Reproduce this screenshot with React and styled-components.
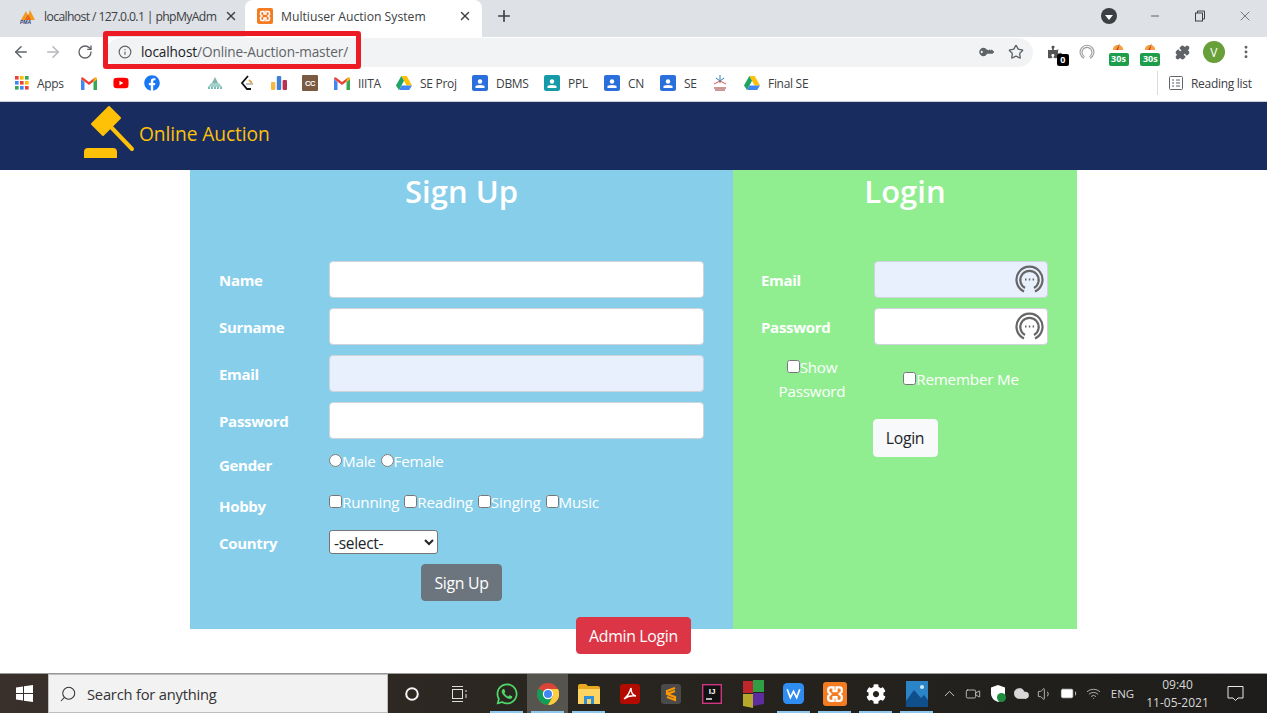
import styled, { createGlobalStyle } from "styled-components";
import {
  ArrowLeft,
  ArrowRight,
  RotateCw,
  Info,
  Star,
  X,
  Plus,
  Minus,
  Puzzle,
  EllipsisVertical,
  ChevronUp,
  Search,
  Volume1,
  Battery,
  Wifi,
  Cloud,
  Video,
} from "lucide-react";
import { FaCog, FaKey, FaPuzzlePiece, FaWhatsapp, FaYoutube, FaFacebook } from "react-icons/fa";

const UI_FONT = `"Open Sans", "Noto Sans", "Liberation Sans", sans-serif`;

const GlobalStyle = createGlobalStyle`
  html, body {
    margin: 0;
    padding: 0;
    background: #fff;
    font-family: ${UI_FONT};
  }
  * { box-sizing: border-box; }
  svg { flex: none; }
`;

const Page = styled.div`
  position: relative;
  width: 1267px;
  height: 713px;
  overflow: hidden;
  display: flex;
  flex-direction: column;
  background: #fff;
`;

/* browser chrome */
const TabStrip = styled.div`
  height: 37px;
  background: #dee1e6;
  display: flex;
  align-items: flex-start;
  color: #3c4043;
  font-size: 12.2px;
`;

const Tab = styled.div`
  width: ${(p) => p.$w}px;
  height: 37px;
  display: flex;
  align-items: center;
  padding: 0 10px 5px ${(p) => p.$pad}px;
  gap: 8px;
  white-space: nowrap;
  background: ${(p) => (p.$active ? "#fff" : "transparent")};
  border-radius: 8px 8px 0 0;
`;

const TabTitle = styled.span`
  flex: 1;
  letter-spacing: ${(p) => p.$track || 0}px;
`;

const NewTab = styled.div`
  width: 44px;
  height: 32px;
  display: flex;
  align-items: center;
  justify-content: center;
  color: #3c4043;
`;

const WindowControls = styled.div`
  margin-left: auto;
  display: flex;
  align-items: center;
  height: 32px;
  color: #3c4043;
`;

const ProfileDot = styled.div`
  width: 16px;
  height: 16px;
  border-radius: 50%;
  background: #3c4043;
  margin-right: 15px;
  display: flex;
  align-items: center;
  justify-content: center;
  &::after {
    content: "";
    border-left: 4px solid transparent;
    border-right: 4px solid transparent;
    border-top: 5px solid #fff;
    margin-top: 2px;
  }
`;

const WinButton = styled.div`
  width: 45px;
  display: flex;
  justify-content: center;
`;

const Toolbar = styled.div`
  height: 30px;
  display: flex;
  align-items: center;
  padding-left: 5px;
  background: #fff;
  color: #5f6368;
`;

const NavSlot = styled.div`
  width: 32px;
  display: flex;
  justify-content: center;
  color: ${(p) => p.$color || "#5f6368"};
`;

const AddressBar = styled.div`
  width: 927px;
  height: 29px;
  margin: 0 6px 0 5px;
  border-radius: 15px;
  background: #f1f3f4;
  display: flex;
  align-items: center;
  padding: 0 9px 1px 12px;
  font-size: 13.6px;
  letter-spacing: -0.1px;
  color: #5f6368;
`;

const UrlHost = styled.span`
  color: #202124;
  margin-left: 9px;
`;

const BarEnd = styled.div`
  margin-left: auto;
  display: flex;
  align-items: center;
  gap: 16px;
`;

const KeyIcon = styled(FaKey)`
  transform: rotate(-135deg);
`;

const ExtensionSlot = styled.div`
  position: relative;
  width: 31.8px;
  height: 24px;
  display: flex;
  align-items: center;
  justify-content: center;
  color: #5f6368;
`;

const CountBadge = styled.span`
  position: absolute;
  right: ${(p) => (p.$wide ? 5.9 : 2)}px;
  bottom: -2px;
  width: ${(p) => (p.$wide ? 20 : 12)}px;
  height: ${(p) => (p.$wide ? 13 : 12)}px;
  border-radius: 2px;
  font-size: 9px;
  line-height: 12px;
  font-weight: 700;
  text-align: center;
  color: #fff;
  background: ${(p) => p.$bg};
`;

const SpeedMark = styled.svg`
  margin-top: -13px;
`;

const Avatar = styled.div`
  width: 22px;
  height: 22px;
  border-radius: 50%;
  background: #689f38;
  color: #fff;
  font-size: 12px;
  display: flex;
  align-items: center;
  justify-content: center;
`;

const BookmarkBar = styled.div`
  height: 34px;
  padding: 0 0 2px 15px;
  display: flex;
  align-items: center;
  background: #fff;
  font-size: 12px;
  letter-spacing: -0.3px;
  color: #3c4043;
`;

const Bookmark = styled.div`
  flex: none;
  width: ${(p) => p.$w}px;
  display: flex;
  align-items: center;
  gap: 8px;
  white-space: nowrap;
`;

const ReadingList = styled.div`
  margin-left: auto;
  width: 110px;
  height: 24px;
  border-left: 1px solid #dadce0;
  padding-left: 11px;
  display: flex;
  align-items: center;
  gap: 8px;
  white-space: nowrap;
`;

/* site */
const Navbar = styled.header`
  height: 69px;
  border-top: 1px solid #c8ccd8;
  background: #192c60;
  padding: 0 0 6px 84px;
  display: flex;
  align-items: center;
  gap: 3px;
`;

const Brand = styled.span`
  font-size: 19.2px;
  letter-spacing: -0.1px;
  color: #ffc107;
  margin-top: 1px;
`;

const Content = styled.main`
  flex: 1;
  display: flex;
  flex-direction: column;
  align-items: center;
`;

const Panels = styled.div`
  display: flex;
  width: 887px;
  height: 459px;
  color: #fff;
`;

const Panel = styled.section`
  width: ${(p) => p.$w}px;
  background: ${(p) => p.$bg};
  padding: 0 0 0 ${(p) => p.$pad}px;
`;

const Heading = styled.h2`
  margin: 0 0 0 -${(p) => p.$pad}px;
  height: 91px;
  padding-top: 1px;
  font-size: 31px;
  line-height: 40px;
  font-weight: 600;
  letter-spacing: 0;
  text-align: center;
`;

const Row = styled.div`
  display: flex;
  height: ${(p) => p.$h}px;
`;

const Label = styled.label`
  flex: none;
  width: ${(p) => p.$w}px;
  padding-top: ${(p) => p.$top}px;
  font-size: 15px;
  line-height: 24px;
  font-weight: 700;
  letter-spacing: -0.3px;
`;

const Field = styled.div`
  position: relative;
  width: ${(p) => p.$w}px;
  height: 37px;
`;

const TextInput = styled.input`
  display: block;
  width: 100%;
  height: 100%;
  padding: 6px 12px;
  border: 1px solid #ced4da;
  border-radius: 4px;
  background: ${(p) => (p.$autofill ? "#e8f0fe" : "#fff")};
`;

const FieldBadge = styled.svg`
  position: absolute;
  right: 4px;
  top: 4px;
`;

const Options = styled.div`
  font-size: 15.2px;
  line-height: 24px;
  letter-spacing: -0.2px;
  word-spacing: 1.2px;
  white-space: nowrap;
`;

const Tick = styled.input`
  margin: 0;
  width: 13px;
  height: 13px;
`;

const CountrySelect = styled.select`
  width: 109px;
  height: 24px;
  font-family: ${UI_FONT};
  font-size: 15.5px;
  letter-spacing: -0.3px;
  color: #212529;
  background: #fff;
  border: 1px solid #767676;
  border-radius: 3px;
`;

const ButtonRow = styled.div`
  display: flex;
  justify-content: center;
  margin-left: -${(p) => p.$pad}px;
  padding-top: ${(p) => p.$top}px;
`;

const Button = styled.button`
  height: ${(p) => p.$h || 37}px;
  width: ${(p) => p.$w}px;
  padding: 0;
  font-family: ${UI_FONT};
  font-size: 15.8px;
  letter-spacing: -0.3px;
  border: 1px solid ${(p) => p.$bg};
  border-radius: 4px;
  color: ${(p) => p.$color};
  background: ${(p) => p.$bg};
`;

const AdminButton = styled(Button)`
  position: relative;
  margin-top: -12px;
`;

const OptionsRow = styled.div`
  display: flex;
  align-items: center;
  height: 48px;
  margin: 0 0 16px -14px;
  font-size: 15.2px;
  line-height: 24px;
  letter-spacing: -0.2px;
`;

const OptionCell = styled.div`
  width: ${(p) => p.$w}px;
  padding: 0 ${(p) => p.$inset || 0}px;
  text-align: center;
`;

/* taskbar */
const Taskbar = styled.footer`
  height: 40px;
  display: flex;
  align-items: stretch;
  border-top: 1px solid #9a9a9a;
  background: linear-gradient(90deg, #3a302b 0%, #2a2620 40%, #1e1d1b 100%);
  color: #e8e8e8;
`;

const StartButton = styled.div`
  width: 48px;
  display: flex;
  align-items: center;
  justify-content: center;
`;

const SearchBox = styled.div`
  width: 340px;
  background: #f2f2f2;
  border: 1px solid #bdbdbd;
  color: #333;
  display: flex;
  align-items: center;
  gap: 10px;
  padding-left: 10px;
  font-size: 14.7px;
  letter-spacing: -0.2px;
`;

const SearchGlyph = styled(Search)`
  transform: scaleX(-1);
`;

const TaskApps = styled.div`
  margin-left: 3px;
  display: flex;
`;

const TaskSlot = styled.div`
  position: relative;
  width: ${(p) => p.$w || 41}px;
  display: flex;
  align-items: center;
  justify-content: center;
  background: ${(p) => (p.$active ? "#55544f" : "transparent")};
  &::after {
    content: "";
    position: absolute;
    left: 4px;
    right: 4px;
    bottom: 0;
    height: 2px;
    background: ${(p) => (p.$open ? "#8fc7ec" : "transparent")};
  }
`;

const Tray = styled.div`
  margin-left: 1px;
  display: flex;
  align-items: center;
  color: #d8d8d8;
`;

const TraySlot = styled.div`
  width: ${(p) => p.$w}px;
  display: flex;
  justify-content: center;
`;

const TrayText = styled.div`
  width: 33px;
  text-align: center;
  font-size: 11.5px;
`;

const Clock = styled.div`
  width: 77px;
  text-align: center;
  font-size: 12px;
  line-height: 18px;
`;

const Notice = styled.div`
  width: 38px;
  display: flex;
  justify-content: center;
`;

const CallOut = styled.div`
  position: absolute;
  left: 103px;
  top: 31px;
  width: 258px;
  height: 38px;
  border: 5px solid #ed1c24;
  border-radius: 3px;
  pointer-events: none;
`;

/* drawings */
const Gavel = () => (
  <svg width="52" height="54" viewBox="0 0 52 54">
    <path d="M25 1 36 12 19 29 8 18Z" fill="#ffc107" strokeLinejoin="round" stroke="#ffc107" strokeWidth="2" />
    <path d="M27 21 48 43" stroke="#ffc107" strokeWidth="4" strokeLinecap="round" />
    <path d="M0 52V46Q0 42 4 42H29Q33 42 33 46V52Z" fill="#ffc107" />
  </svg>
);

const PmaIcon = () => (
  <svg width="16" height="16" viewBox="0 0 16 16">
    <path d="M1 12 6 3 8 8 10 2 15 12Z" fill="#f39a1d" />
    <path d="M5 12 8 6 11 12Z" fill="#e8681a" />
    <text x="0" y="16" fontSize="5" fontWeight="700" fontStyle="italic" fill="#2a3a78" fontFamily="Liberation Sans">PMA</text>
  </svg>
);

const XamppIcon = ({ size = 16 }) => (
  <svg width={size} height={size} viewBox="0 0 16 16">
    <rect width="16" height="16" rx="2" fill="#f37b21" />
    <path
      d="M5 3.5H7V6H9V3.5H11Q12.5 3.5 12.5 5V6.5L11 8 12.5 9.5V11Q12.5 12.5 11 12.5H9V10H7V12.5H5Q3.5 12.5 3.5 11V9.5L5 8 3.5 6.5V5Q3.5 3.5 5 3.5Z"
      fill="none"
      stroke="#fff"
      strokeWidth="1.5"
    />
  </svg>
);

const GmailIcon = () => (
  <svg width="16" height="13" viewBox="0 0 16 13">
    <path d="M0 2V13H3.5V5Z" fill="#4285f4" />
    <path d="M16 2V13H12.5V5Z" fill="#34a853" />
    <path d="M0 2Q0 0 2 .4L8 5 14 .4 16 2 8 8Z" fill="#ea4335" />
    <path d="M14 .4Q16 0 16 2L12.5 5V3Z" fill="#fbbc04" />
  </svg>
);

const DriveIcon = () => (
  <svg width="16" height="14" viewBox="0 0 16 14">
    <path d="M5.3 0H10.7L16 9.5H10.6Z" fill="#ffc107" />
    <path d="M3 14 5.5 9.5H16L13.2 14Z" fill="#4285f4" />
    <path d="M0 9.5 5.3 0 8 4.7 3 14Z" fill="#1fa463" />
  </svg>
);

const ContactIcon = ({ bg }) => (
  <svg width="16" height="16" viewBox="0 0 16 16">
    <rect width="16" height="16" rx="2" fill={bg} />
    <circle cx="8" cy="6.5" r="2.2" fill="#fff" />
    <path d="M3.5 13V11.5Q3.5 10 8 10T12.5 11.5V13Z" fill="#fff" />
  </svg>
);

const AppsIcon = () => {
  const colors = ["#ea4335", "#fbbc04", "#34a853", "#4285f4", "#ea4335", "#fbbc04", "#34a853", "#4285f4", "#ea4335"];
  return (
    <svg width="14" height="14" viewBox="0 0 14 14">
      {colors.map((c, i) => (
        <rect key={i} x={(i % 3) * 5} y={Math.floor(i / 3) * 5} width="3.6" height="3.6" fill={c} />
      ))}
    </svg>
  );
};

const PyramidIcon = () => (
  <svg width="16" height="14" viewBox="0 0 16 14">
    <path d="M8 1 11 7H5Z" fill="#7fb5b0" />
    <path d="M4 7H12L15 11H1Z" fill="#a5cfc9" />
    <path d="M1 12H15" stroke="#4aa7a0" strokeWidth="1.5" strokeDasharray="2 1" />
  </svg>
);

const LeetIcon = () => (
  <svg width="14" height="16" viewBox="0 0 14 16">
    <path d="M8 1 2 8 7 14H11" fill="none" stroke="#111" strokeWidth="1.8" />
    <path d="M9 5 12 8" stroke="#e8a33d" strokeWidth="1.8" />
    <path d="M6 9H13" stroke="#aaa" strokeWidth="1.5" />
  </svg>
);

const BarsIcon = () => (
  <svg width="16" height="14" viewBox="0 0 16 14">
    <rect x="0" y="6" width="4.4" height="8" rx="1" fill="#f5b942" />
    <rect x="5.8" y="0" width="4.4" height="14" rx="1" fill="#3f7fd6" />
    <rect x="11.6" y="4" width="4.4" height="10" rx="1" fill="#b8324f" />
  </svg>
);

const CcIcon = () => (
  <svg width="16" height="16" viewBox="0 0 16 16">
    <rect width="16" height="16" rx="1" fill="#7a5b42" />
    <text x="8" y="11" fontSize="7.5" fontWeight="700" textAnchor="middle" fill="#fff" fontFamily="Liberation Sans">CC</text>
  </svg>
);

const CollegeIcon = () => (
  <svg width="16" height="18" viewBox="0 0 16 18">
    <path d="M8 1V9M4 4 8 7 12 4" stroke="#2a7fb8" fill="none" />
    <path d="M2 10 8 7 14 10" stroke="#d9534f" fill="none" />
    <path d="M2 14H14M3 16H13" stroke="#b77" strokeWidth="1.4" />
  </svg>
);

const SpeedBadge = () => (
  <ExtensionSlot>
    <SpeedMark width="14" height="9" viewBox="0 0 16 10">
      <path d="M2 10A6 6 0 0 1 14 10Z" fill="#f3a13c" />
      <path d="M8 10 10 2 6 10Z" fill="#c0392b" />
    </SpeedMark>
    <CountBadge $wide $bg="#1e9e4a">30s</CountBadge>
  </ExtensionSlot>
);

const ChromeIcon = () => (
  <svg width="22" height="22" viewBox="0 0 22 22">
    <circle cx="11" cy="11" r="11" fill="#db4437" />
    <path d="M11 11 1.5 5.5A11 11 0 0 0 11 22L16 13Z" fill="#0f9d58" />
    <path d="M11 6H21A11 11 0 0 1 11 22L16 13Z" fill="#ffcd40" />
    <circle cx="11" cy="11" r="5.2" fill="#fff" />
    <circle cx="11" cy="11" r="4" fill="#4285f4" />
  </svg>
);

const FolderIcon = () => (
  <svg width="22" height="20" viewBox="0 0 22 20">
    <path d="M0 2Q0 0 2 0H8L10 2H20Q22 2 22 4V6H0Z" fill="#e9a820" />
    <rect y="5" width="22" height="15" fill="#fcd462" />
    <rect x="6" y="12" width="10" height="8" fill="#2f8fd8" />
    <rect x="9" y="15" width="4" height="5" fill="#fcd462" />
  </svg>
);

const AppTile = ({ bg, children, size = 20, radius = 3 }) => (
  <svg width={size} height={size} viewBox="0 0 20 20">
    <rect width="20" height="20" rx={radius} fill={bg} />
    {children}
  </svg>
);

const TaskIcons = [
  {
    key: "cortana",
    node: (
      <svg width="16" height="16" viewBox="0 0 16 16">
        <circle cx="8" cy="8" r="5.8" fill="none" stroke="#f5f5f5" strokeWidth="2" />
      </svg>
    ),
  },
  {
    key: "view",
    w: 54,
    node: (
      <svg width="17" height="18" viewBox="0 0 17 18" fill="none" stroke="#ddd">
        <rect x="1.5" y="4.5" width="10" height="9" />
        <path d="M1 1.5H12M1 16.5H12M15 5V7M15 9V13" />
      </svg>
    ),
  },
  { key: "whatsapp", open: true, node: <FaWhatsapp size={24} color="#4fd769" /> },
  { key: "chrome", open: true, active: true, node: <ChromeIcon /> },
  { key: "files", open: true, node: <FolderIcon /> },
  {
    key: "pdf",
    node: (
      <AppTile bg="#b30b00">
        <path d="M4 15Q9 11 11 4 11 11 16 12 9 11 4 15Z" fill="none" stroke="#fff" strokeWidth="1.4" />
      </AppTile>
    ),
  },
  {
    key: "sublime",
    node: (
      <AppTile bg="#4a4a4a">
        <path d="M14 4 6 7V10L14 13V16L6 13M6 10 14 7" fill="none" stroke="#ff9800" strokeWidth="2.2" />
      </AppTile>
    ),
  },
  {
    key: "idea",
    node: (
      <AppTile bg="#111" radius={1}>
        <rect x=".7" y=".7" width="18.6" height="18.6" fill="none" stroke="#d0367f" strokeWidth="1.4" />
        <text x="10" y="10" fontSize="8" fontWeight="700" textAnchor="middle" fill="#fff" fontFamily="Liberation Sans">IJ</text>
        <path d="M4 15H10" stroke="#fff" strokeWidth="1.4" />
      </AppTile>
    ),
  },
  {
    key: "office",
    node: (
      <svg width="22" height="28" viewBox="0 0 22 28">
        <path d="M1 1H11V13H1Z" fill="#c0272d" />
        <path d="M11 0H22V12H11Z" fill="#2f9e44" />
        <path d="M1 14H11V28L1 26Z" fill="#b5a82a" />
        <path d="M11 13H22V24L11 26Z" fill="#5b2d9e" />
      </svg>
    ),
  },
  {
    key: "wps",
    open: true,
    node: (
      <AppTile bg="#2f8cf0" size={21} radius={4}>
        <path d="M4 6 7 14 10 8 13 14 16 6" fill="none" stroke="#fff" strokeWidth="1.6" />
      </AppTile>
    ),
  },
  { key: "xampp", open: true, node: <XamppIcon size={24} /> },
  { key: "gear", open: true, node: <FaCog size={20} color="#fff" /> },
  {
    key: "photos",
    open: true,
    node: (
      <svg width="22" height="26" viewBox="0 0 22 26">
        <rect width="22" height="26" fill="#2b84c6" />
        <path d="M0 20 8 9 15 17 18 14 22 19V26H0Z" fill="#0f4f8b" />
        <circle cx="16" cy="6" r="2" fill="#cfe8f8" />
      </svg>
    ),
  },
];

const marks = [
  { w: 66, icon: <AppsIcon />, text: "Apps" },
  { w: 32, icon: <GmailIcon /> },
  { w: 31, icon: <FaYoutube size={16} color="#f00" /> },
  { w: 63, icon: <FaFacebook size={16} color="#1877f2" /> },
  { w: 33, icon: <PyramidIcon /> },
  { w: 31, icon: <LeetIcon /> },
  { w: 31, icon: <BarsIcon /> },
  { w: 32, icon: <CcIcon /> },
  { w: 62, icon: <GmailIcon />, text: "IIITA" },
  { w: 76, icon: <DriveIcon />, text: "SE Proj" },
  { w: 72, icon: <ContactIcon bg="#2a6fdb" />, text: "DBMS" },
  { w: 60, icon: <ContactIcon bg="#159aa8" />, text: "PPL" },
  { w: 56, icon: <ContactIcon bg="#2a6fdb" />, text: "CN" },
  { w: 52, icon: <ContactIcon bg="#2a6fdb" />, text: "SE" },
  { w: 32, icon: <CollegeIcon /> },
  { w: 80, icon: <DriveIcon />, text: "Final SE" },
];

const EchoBadge = () => (
  <FieldBadge width="29" height="29" viewBox="0 0 29 29" fill="none" stroke="#666">
    <path d="M9 26.5A13 13 0 1 1 20 26.5" strokeWidth="2.2" />
    <path d="M10 23A9.2 9.2 0 1 1 19 23" strokeWidth="2.2" />
    <path d="M10 14.5H11.5M13.8 14.5H15.3M17.6 14.5H19.1" strokeWidth="1.8" />
  </FieldBadge>
);

const App = () => {
  return (
    <Page>
      <GlobalStyle />

      <TabStrip>
        <Tab $w={245} $pad={20}>
          <PmaIcon />
          <TabTitle $track={-0.62}>localhost / 127.0.0.1 | phpMyAdm</TabTitle>
          <X size={14} strokeWidth={2.4} />
        </Tab>
        <Tab $w={237} $active $pad={12}>
          <XamppIcon />
          <TabTitle>Multiuser Auction System</TabTitle>
          <X size={14} strokeWidth={2.4} />
        </Tab>
        <NewTab>
          <Plus size={18} strokeWidth={2.2} />
        </NewTab>
        <WindowControls>
          <ProfileDot />
          <WinButton>
            <Minus size={12} strokeWidth={1.6} />
          </WinButton>
          <WinButton>
            <svg width="12" height="12" viewBox="0 0 12 12" fill="none" stroke="#3c4043">
              <rect x="1.5" y="3" width="7" height="8" />
              <path d="M3.5 3V1H10.5V9H8.5" />
            </svg>
          </WinButton>
          <WinButton>
            <X size={16} strokeWidth={1} />
          </WinButton>
        </WindowControls>
      </TabStrip>

      <Toolbar>
        <NavSlot>
          <ArrowLeft size={18} />
        </NavSlot>
        <NavSlot $color="#b5b8bc">
          <ArrowRight size={18} />
        </NavSlot>
        <NavSlot>
          <RotateCw size={16} />
        </NavSlot>
        <AddressBar>
          <Info size={14} />
          <UrlHost>localhost</UrlHost>/Online-Auction-master/
          <BarEnd>
            <KeyIcon size={12} />
            <Star size={16} />
          </BarEnd>
        </AddressBar>
        <ExtensionSlot>
          <FaPuzzlePiece size={14} color="#555" />
          <CountBadge $bg="#000">0</CountBadge>
        </ExtensionSlot>
        <ExtensionSlot>
          <svg width="16" height="18" viewBox="0 0 29 29" fill="none" stroke="#9a9a9a">
            <path d="M9 26A12.5 12.5 0 1 1 20 26" strokeWidth="2" />
            <path d="M10 23A9 9 0 1 1 19 23" strokeWidth="2" />
          </svg>
        </ExtensionSlot>
        <SpeedBadge />
        <SpeedBadge />
        <ExtensionSlot>
          <Puzzle size={15} fill="#5f6368" />
        </ExtensionSlot>
        <ExtensionSlot>
          <Avatar>V</Avatar>
        </ExtensionSlot>
        <ExtensionSlot>
          <EllipsisVertical size={16} strokeWidth={2.4} />
        </ExtensionSlot>
      </Toolbar>

      <BookmarkBar>
        {marks.map((m, i) => (
          <Bookmark key={i} $w={m.w}>
            {m.icon}
            {m.text && <span>{m.text}</span>}
          </Bookmark>
        ))}
        <ReadingList>
          <svg width="14" height="14" viewBox="0 0 14 14" fill="none" stroke="#5f6368">
            <rect x=".5" y=".5" width="13" height="13" rx="1" />
            <path d="M3 4H5M7 4H11M3 7H5M7 7H11M3 10H5M7 10H11" />
          </svg>
          Reading list
        </ReadingList>
      </BookmarkBar>

      <Navbar>
        <Gavel />
        <Brand>Online Auction</Brand>
      </Navbar>

      <Content>
        <Panels>
          <Panel $w={543} $bg="#87ceeb" $pad={29}>
            <Heading $pad={29}>Sign Up</Heading>
            <Row $h={47}>
              <Label $w={110} $top={7}>Name</Label>
              <Field $w={375}><TextInput /></Field>
            </Row>
            <Row $h={47}>
              <Label $w={110} $top={7}>Surname</Label>
              <Field $w={375}><TextInput /></Field>
            </Row>
            <Row $h={47}>
              <Label $w={110} $top={7}>Email</Label>
              <Field $w={375}><TextInput $autofill /></Field>
            </Row>
            <Row $h={47}>
              <Label $w={110} $top={7}>Password</Label>
              <Field $w={375}><TextInput /></Field>
            </Row>
            <Row $h={41}>
              <Label $w={110} $top={4}>Gender</Label>
              <Options>
                <Tick type="radio" name="gender" />Male <Tick type="radio" name="gender" />Female
              </Options>
            </Row>
            <Row $h={40}>
              <Label $w={110} $top={4}>Hobby</Label>
              <Options>
                <Tick type="checkbox" />Running <Tick type="checkbox" />Reading{" "}
                <Tick type="checkbox" />Singing <Tick type="checkbox" />Music
              </Options>
            </Row>
            <Row $h={34}>
              <Label $w={110} $top={1}>Country</Label>
              <CountrySelect>
                <option>-select-</option>
              </CountrySelect>
            </Row>
            <ButtonRow $pad={29}>
              <Button $w={81} $bg="#6c757d" $color="#fff">Sign Up</Button>
            </ButtonRow>
          </Panel>

          <Panel $w={344} $bg="#90ee90" $pad={28}>
            <Heading $pad={28}>Login</Heading>
            <Row $h={47}>
              <Label $w={113} $top={7}>Email</Label>
              <Field $w={174}>
                <TextInput $autofill />
                <EchoBadge />
              </Field>
            </Row>
            <Row $h={47}>
              <Label $w={113} $top={7}>Password</Label>
              <Field $w={174}>
                <TextInput />
                <EchoBadge />
              </Field>
            </Row>
            <OptionsRow>
              <OptionCell $w={130} $inset={28}>
                <Tick type="checkbox" />Show Password
              </OptionCell>
              <OptionCell $w={168}>
                <Tick type="checkbox" />Remember Me
              </OptionCell>
            </OptionsRow>
            <ButtonRow $pad={28}>
              <Button $w={65} $h={38} $bg="#f8f9fa" $color="#212529">Login</Button>
            </ButtonRow>
          </Panel>
        </Panels>
        <AdminButton $w={115} $bg="#dc3545" $color="#fff">Admin Login</AdminButton>
      </Content>

      <Taskbar>
        <StartButton>
          <svg width="17" height="17" viewBox="0 0 17 17" fill="#fff">
            <path d="M0 2.4 7 1.4V8H0ZM8 1.2 17 0V8H8ZM0 9H7V15.6L0 14.6ZM8 9H17V17L8 15.8Z" />
          </svg>
        </StartButton>
        <SearchBox>
          <SearchGlyph size={18} strokeWidth={1.4} />
          Search for anything
        </SearchBox>
        <TaskApps>
          {TaskIcons.map((t) => (
            <TaskSlot key={t.key} $w={t.w} $open={t.open} $active={t.active}>
              {t.node}
            </TaskSlot>
          ))}
        </TaskApps>
        <Tray>
          <TraySlot $w={22}><ChevronUp size={17} strokeWidth={1.3} /></TraySlot>
          <TraySlot $w={26}><Video size={16} strokeWidth={1.2} /></TraySlot>
          <TraySlot $w={24}>
            <svg width="16" height="17" viewBox="0 0 16 17">
              <path d="M8 0 15 2.5V9Q15 14 8 17 1 14 1 9V2.5Z" fill="#fff" />
              <circle cx="11.5" cy="12.5" r="4.5" fill="#1e8e3e" />
            </svg>
          </TraySlot>
          <TraySlot $w={23}><Cloud size={17} fill="#d8d8d8" strokeWidth={1} /></TraySlot>
          <TraySlot $w={23}><Volume1 size={16} strokeWidth={1.2} /></TraySlot>
          <TraySlot $w={25}><Battery size={17} strokeWidth={1.2} fill="#fff" /></TraySlot>
          <TraySlot $w={25}><Wifi size={15} strokeWidth={1.2} /></TraySlot>
          <TrayText>ENG</TrayText>
          <Clock>
            09:40
            <br />
            11-05-2021
          </Clock>
          <Notice>
            <svg width="17" height="17" viewBox="0 0 17 17" fill="none" stroke="#e8e8e8">
              <path d="M1 1.5H16V13H11L8.5 15.5 6 13H1Z" />
            </svg>
          </Notice>
        </Tray>
      </Taskbar>

      <CallOut />
    </Page>
  );
};

export default App;
